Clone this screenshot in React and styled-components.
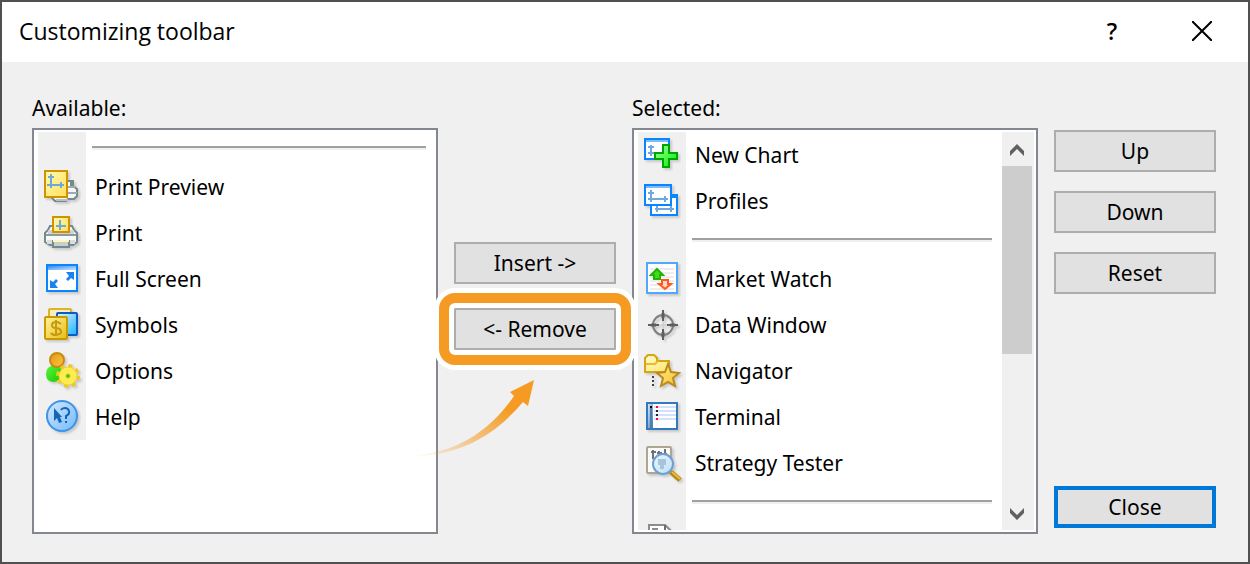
import React from "react";
import styled, { createGlobalStyle } from "styled-components";

const GlobalStyle = createGlobalStyle`
  * {
    box-sizing: border-box;
  }
  body {
    margin: 0;
    color: #000;
    font-family: "Noto Sans", "Open Sans", sans-serif;
    font-size: 21px;
    line-height: 28px;
  }
`;

const Dialog = styled.main`
  display: flex;
  flex-direction: column;
  height: 100vh;
  min-height: 480px;
  border: 2px solid #505050;
  background-color: #f0f0f0;
`;

const TitleBar = styled.header`
  display: flex;
  align-items: center;
  height: 60px;
  padding: 0 31px 3px 17px;
  background-color: white;
`;
const Title = styled.h1`
  flex: 1;
  margin: 0;
  font-family: "Open Sans", "Noto Sans", sans-serif;
  font-size: 23px;
  font-weight: 400;
`;
const TitleButton = styled.button`
  display: flex;
  align-items: center;
  justify-content: center;
  width: 30px;
  height: 30px;
  margin-left: 60px;
  padding: 0;
  border: 0;
  background: none;
  color: #000;
  font-family: "Open Sans", "Noto Sans", sans-serif;
  font-size: 23px;
  font-weight: 600;
`;

const Body = styled.div`
  flex: 1;
  display: flex;
  gap: 16px;
  min-height: 0;
  padding: 32px 32px 28px 30px;
`;

const ListColumn = styled.section`
  flex: 1;
  display: flex;
  flex-direction: column;
  min-width: 0;
`;
const ListLabel = styled.h2`
  margin: 0 0 6px;
  font-size: 21px;
  font-weight: 400;
`;
const ListFrame = styled.div`
  flex: 1;
  display: flex;
  min-height: 0;
  padding: 2px 2px 2px 4px;
  border: 2px solid #828790;
  background-color: white;
`;
const Items = styled.ul`
  flex: 1;
  margin: 0;
  padding: 0;
  overflow: hidden;
  list-style: none;
`;
const Item = styled.li`
  display: flex;
  align-items: center;
  height: 46px;
`;
const Gutter = styled.span`
  display: flex;
  flex: none;
  align-items: center;
  justify-content: center;
  width: 48px;
  height: 100%;
  margin-right: 9px;
  background-color: #f0f0f0;
`;
const Divider = styled.li`
  display: flex;
  height: 32px;
  padding-right: 8px;
`;
const DividerGutter = styled(Gutter)`
  margin-right: 6px;
`;
const DividerLine = styled.span`
  flex: 1;
  height: 4px;
  margin-top: 14px;
  border-top: 2px solid #a0a0a0;
  background-color: #f0f0f0;
`;

const ScrollBar = styled.div`
  display: flex;
  flex-direction: column;
  flex: none;
  width: 32px;
  margin-left: 2px;
  background-color: #f0f0f0;
`;
const ScrollArrow = styled.button`
  display: flex;
  align-items: center;
  justify-content: center;
  width: 30px;
  height: 34px;
  padding: 2px 0 0;
  border: 0;
  background: none;
`;
const Track = styled.div`
  flex: 1;
`;
const Thumb = styled.div`
  width: 30px;
  height: 57%;
  background-color: #cdcdcd;
`;

const ButtonColumn = styled.div`
  display: flex;
  flex-direction: column;
  flex: none;
  width: 162px;
`;
const MoveButtons = styled(ButtonColumn)`
  gap: 24px;
  padding-top: 148px;
`;
const SideButtons = styled(ButtonColumn)`
  gap: 19px;
  padding: 36px 0 6px;
`;
const Button = styled.button`
  width: 100%;
  height: 42px;
  padding: 0;
  border: ${(props) =>
    props.$default ? "4px solid #0078d7" : "2px solid #adadad"};
  background-color: #e1e1e1;
  color: #000;
  font-family: inherit;
  font-size: 21px;
  line-height: 28px;
`;
const CloseButton = styled(Button)`
  margin-top: auto;
`;
const Highlight = styled.div`
  position: relative;
  z-index: 1;
  display: flex;

  &::after {
    content: "";
    position: absolute;
    inset: -15px;
    border: 10px solid #f59b23;
    border-radius: 16px;
    box-shadow: 0 0 0 5px #fff, inset 0 0 0 5px #fff;
    pointer-events: none;
  }
`;
const PointerArrow = styled.svg`
  position: absolute;
  top: 70px;
  left: -44px;
  pointer-events: none;
`;

const IconSvg = styled.svg`
  flex: none;
  overflow: visible;
  filter: drop-shadow(2px 2px 1px rgba(0, 0, 0, 0.16));
`;

const Icon = ({ children }) => (
  <IconSvg width="36" height="36" viewBox="0 0 36 36" fill="none" aria-hidden="true">
    {children}
  </IconSvg>
);

const PrintPreviewIcon = () => (
  <Icon>
    <path d="M22 12h7v5l4 3v7l-3 3h-6l-2 2H11l-3-3z" fill="#f4f6f6" stroke="#75898c" strokeWidth="2" />
    <path d="M24 18h7M24 24h9" stroke="#9babae" strokeWidth="2" />
    <path d="M27 13v4" stroke="#75898c" strokeWidth="2" />
    <path d="M12 31h12" stroke="#b9c2c3" strokeWidth="2" />
    <rect x="1" y="2" width="22" height="26" fill="url(#paper)" stroke="#d29100" strokeWidth="2" />
    <path d="M7 5v14M4 8h6M3 16h17M17 13v6" stroke="#6ea8dc" strokeWidth="2" />
  </Icon>
);

const PrintIcon = () => (
  <Icon>
    <path d="M8 11H6l-2 4-3 3v9l5 3h23l4-3v-9l-3-3-2-4h-2z" fill="#f8f9f9" stroke="#75898c" strokeWidth="2" />
    <path d="M4 17h26" stroke="#d2d2d2" strokeWidth="4" />
    <path d="M2 20h30" stroke="#8b9c9e" strokeWidth="2" />
    <path d="M3 27h28" stroke="#d9dddd" strokeWidth="4" />
    <rect x="9" y="2" width="16" height="15" fill="url(#paper)" stroke="#d29100" strokeWidth="2" />
    <path d="M16 5v10M12 11h10" stroke="#6ea8dc" strokeWidth="2" />
    <rect x="9" y="26" width="16" height="6" fill="#c8cfcf" stroke="#75898c" strokeWidth="2" />
    <path d="M9 26h16" stroke="#fff6bd" strokeWidth="2" />
  </Icon>
);

const FullScreenIcon = () => (
  <Icon>
    <rect x="3" y="4" width="30" height="26" fill="#fff" stroke="#0a84ff" strokeWidth="2" />
    <rect x="4" y="5" width="28" height="4" fill="url(#header)" />
    <path d="M22 11h8v8l-3-2-3 3-2-2 3-3z" fill="#1684f0" />
    <path d="M14 27H6v-8l3 2 3-3 2 2-3 3z" fill="#1684f0" />
  </Icon>
);

const SymbolsIcon = () => (
  <Icon>
    <rect x="5" y="2" width="22" height="20" rx="1" fill="#f8eec0" stroke="#dcb522" strokeWidth="2" />
    <rect x="13" y="6" width="20" height="22" rx="1" fill="url(#blue)" stroke="#0b5cc8" strokeWidth="2" />
    <rect x="1" y="10" width="22" height="22" rx="1" fill="url(#gold)" stroke="#c99a00" strokeWidth="2" />
    <path d="M17 17q-2-2-5-2-4 0-4 3t4 3 5 3-5 4q-4 0-5-2M12 13v16" stroke="#c39a10" strokeWidth="2" />
  </Icon>
);

const OptionsIcon = () => (
  <Icon>
    <path d="M7 13q-5 2-5 8 0 8 8 8 8-1 8-9t-7-7z" fill="url(#green)" />
    <circle cx="13" cy="7" r="7" fill="url(#orange)" stroke="#c98a0e" strokeWidth="2" />
    <circle cx="24" cy="23" r="10" stroke="#ecc92a" strokeWidth="4" strokeDasharray="4 3.85" />
    <circle cx="24" cy="23" r="9" fill="#ffec50" stroke="#f0d030" strokeWidth="1" />
    <circle cx="24" cy="23" r="2" fill="#3fc417" stroke="#b8c810" strokeWidth="1" />
  </Icon>
);

const HelpIcon = () => (
  <Icon>
    <circle cx="18" cy="17" r="15" fill="url(#help)" stroke="#3c94ea" strokeWidth="2" />
    <path d="M10 9v13l3-3 2 5 3-1-2-5h2z" fill="#1465b4" />
    <path d="M17 11q1-2 4-2t4 3-3 5v3M21 23h2" stroke="#1465b4" strokeWidth="2" />
  </Icon>
);

const NewChartIcon = () => (
  <Icon>
    <rect x="1" y="2" width="24" height="20" fill="#fff" stroke="#0a84ff" strokeWidth="2" />
    <path d="M2 4h22" stroke="#7fbcfb" strokeWidth="2" />
    <path d="M7 8v11M4 10h6M4 16h7" stroke="#6ea8dc" strokeWidth="2" />
    <path d="M19 8h6v8h8v6h-8v8h-6v-8h-8v-6h8z" fill="url(#plus)" stroke="#00a600" strokeWidth="2" />
  </Icon>
);

const ProfilesIcon = () => (
  <Icon>
    <rect x="7" y="12" width="26" height="20" fill="#fff" stroke="#0a84ff" strokeWidth="2" />
    <path d="M28 13h5" stroke="#0a84ff" strokeWidth="4" />
    <path d="M11 26h19M13 23v6M27 23v6" stroke="#6ea8dc" strokeWidth="2" />
    <rect x="1" y="2" width="26" height="20" fill="#fff" stroke="#0a84ff" strokeWidth="2" />
    <path d="M2 4h24" stroke="#7fbcfb" strokeWidth="2" />
    <path d="M7 7v12M4 10h6M4 16h20M21 13v6" stroke="#6ea8dc" strokeWidth="2" />
  </Icon>
);

const MarketWatchIcon = () => (
  <Icon>
    <rect x="3" y="2" width="30" height="30" fill="#fff" stroke="#4fa8fd" strokeWidth="2" />
    <path d="M6 8h24M6 12h24M6 16h24M6 20h24M6 24h24M6 28h24" stroke="#ededed" strokeWidth="2" />
    <path d="M13 8l6 6h-3v4h-6v-4H7z" fill="#3fdc1c" stroke="#22b408" strokeWidth="2" />
    <path d="M21 28l-6-5h3v-4h6v4h3z" fill="#ffd6c8" stroke="#ff5a1c" strokeWidth="2" />
  </Icon>
);

const DataWindowIcon = () => (
  <Icon>
    <circle cx="19" cy="18" r="10" stroke="#808080" strokeWidth="2" />
    <path d="M19 3v11M19 22v11M4 18h11M23 18h11" stroke="#5e5e5e" strokeWidth="2" />
    <path d="M19 6v5M19 25v5M7 18h5M26 18h5" stroke="#5e5e5e" strokeWidth="3" />
    <path d="M19 14v8M15 18h8" stroke="#c5c5c5" strokeWidth="1" />
  </Icon>
);

const NavigatorIcon = () => (
  <Icon>
    <path d="M1 19V5l3-3h6l3 3v3h12v11z" fill="url(#folder)" stroke="#d5a514" strokeWidth="2" />
    <path d="M2 11h9l3-3" stroke="#e3bd3a" strokeWidth="2" />
    <path d="M9 23v12" stroke="#404040" strokeWidth="2" strokeDasharray="2 2" />
    <path d="M24 11l3 8 8 1-6 5 2 8-7-4-7 4 2-8-6-5 8-1z" fill="url(#star)" stroke="#b98b1d" strokeWidth="2" />
  </Icon>
);

const TerminalIcon = () => (
  <Icon>
    <rect x="3" y="4" width="30" height="26" fill="#fff" stroke="#3279bd" strokeWidth="2" />
    <rect x="4" y="5" width="5" height="24" fill="url(#strip)" />
    <path d="M7 9v20" stroke="#4a7fb0" strokeWidth="2" />
    <path d="M6 8h2" stroke="#000" strokeWidth="2" />
    <path d="M10 8h22M10 12h22M10 16h22M10 20h22" stroke="#d3e1ff" strokeWidth="2" />
    <path d="M12 8h2M12 20h2" stroke="#ff1010" strokeWidth="2" />
    <path d="M12 12h2M12 16h2" stroke="#202020" strokeWidth="2" />
  </Icon>
);

const StrategyTesterIcon = () => (
  <Icon>
    <rect x="3" y="2" width="24" height="26" rx="1" fill="#fafafa" stroke="#aaa692" strokeWidth="2" />
    <path d="M9 5v9M7 7h5M15 6v7M13 8h5M21 4v8M19 9h4" stroke="#6f7275" strokeWidth="2" />
    <path d="M27 27l9 8" stroke="#b8860b" strokeWidth="5" />
    <path d="M28 27l8 7" stroke="#e9bd3c" strokeWidth="2" />
    <circle cx="19" cy="19" r="10" fill="url(#lens)" stroke="#6d9fd2" strokeWidth="2" />
    <path d="M14 14h8v6h-2v4h-4v-4h-2z" fill="#93b3cd" opacity="0.7" />
  </Icon>
);

const DocumentIcon = () => (
  <Icon>
    <path d="M5 36V2h16l6 6v28z" fill="#fff" stroke="#8c8c8c" strokeWidth="2" />
    <path d="M21 2v6h6" stroke="#6e6e6e" strokeWidth="2" />
    <path d="M8 6h6" stroke="#8c8c8c" strokeWidth="2" />
  </Icon>
);

const Gradient = ({ id, from, to }) => (
  <linearGradient id={id} x1="0" y1="0" x2="1" y2="1">
    <stop offset="0" stopColor={from} />
    <stop offset="1" stopColor={to} />
  </linearGradient>
);

const Gradients = () => (
  <defs>
    <Gradient id="paper" from="#fffbb0" to="#ffe05a" />
    <Gradient id="header" from="#2f8cf4" to="#c9e4ff" />
    <Gradient id="blue" from="#e8f4ff" to="#19b4f8" />
    <Gradient id="gold" from="#fff3a0" to="#e8bd10" />
    <Gradient id="green" from="#5cf53c" to="#14c800" />
    <Gradient id="orange" from="#dd9a10" to="#ffc64a" />
    <Gradient id="help" from="#d2e9ff" to="#74b9fb" />
    <Gradient id="plus" from="#a4ffa4" to="#00f000" />
    <Gradient id="folder" from="#fffbd0" to="#ffe46a" />
    <Gradient id="star" from="#ffe98c" to="#f5c32c" />
    <Gradient id="strip" from="#d8e9f8" to="#3e7ab5" />
    <Gradient id="lens" from="#e9f5ff" to="#c0dff6" />
  </defs>
);

const available = [
  { divider: true },
  { name: "Print Preview", icon: PrintPreviewIcon },
  { name: "Print", icon: PrintIcon },
  { name: "Full Screen", icon: FullScreenIcon },
  { name: "Symbols", icon: SymbolsIcon },
  { name: "Options", icon: OptionsIcon },
  { name: "Help", icon: HelpIcon },
];

const selected = [
  { name: "New Chart", icon: NewChartIcon },
  { name: "Profiles", icon: ProfilesIcon },
  { divider: true },
  { name: "Market Watch", icon: MarketWatchIcon },
  { name: "Data Window", icon: DataWindowIcon },
  { name: "Navigator", icon: NavigatorIcon },
  { name: "Terminal", icon: TerminalIcon },
  { name: "Strategy Tester", icon: StrategyTesterIcon },
  { divider: true },
  { icon: DocumentIcon },
];

const ToolList = ({ id, label, items, children }) => (
  <ListColumn>
    <ListLabel id={id}>{label}</ListLabel>
    <ListFrame>
      <Items aria-labelledby={id}>
        {items.map((item, index) =>
          item.divider ? (
            <Divider key={index}>
              <DividerGutter />
              <DividerLine />
            </Divider>
          ) : (
            <Item key={index}>
              <Gutter>
                <item.icon />
              </Gutter>
              {item.name}
            </Item>
          )
        )}
      </Items>
      {children}
    </ListFrame>
  </ListColumn>
);

const App = () => {
  return (
    <Dialog>
      <GlobalStyle />
      <TitleBar>
        <Title>Customizing toolbar</Title>
        <TitleButton aria-label="Help">?</TitleButton>
        <TitleButton aria-label="Close window">
          <svg width="20" height="20" viewBox="0 0 20 20">
            <path d="M0 0l20 20M20 0L0 20" stroke="#000" strokeWidth="2" />
          </svg>
        </TitleButton>
      </TitleBar>
      <Body>
        <ToolList id="available" label="Available:" items={available} />
        <MoveButtons>
          <Button>Insert -&gt;</Button>
          <Highlight>
            <Button>&lt;- Remove</Button>
            <PointerArrow width="126" height="80" viewBox="0 0 126 80" aria-hidden="true">
              <defs>
                <linearGradient id="pointer" x1="0" y1="1" x2="1" y2="0">
                  <stop offset="0" stopColor="#f59b23" stopOpacity="0" />
                  <stop offset="0.7" stopColor="#f59b23" />
                </linearGradient>
              </defs>
              <path
                d="M0 78C50 78 84 58 113 24l5 4 6-26-24 12 4 4C82 50 50 75 0 78z"
                fill="url(#pointer)"
              />
            </PointerArrow>
          </Highlight>
        </MoveButtons>
        <ToolList id="selected" label="Selected:" items={selected}>
          <ScrollBar>
            <ScrollArrow aria-label="Scroll up">
              <svg width="14" height="12" viewBox="0 0 14 12">
                <path d="M7 0l7 7v5L7 5l-7 7V7z" fill="#606060" />
              </svg>
            </ScrollArrow>
            <Track>
              <Thumb />
            </Track>
            <ScrollArrow aria-label="Scroll down">
              <svg width="14" height="12" viewBox="0 0 14 12">
                <path d="M7 12L0 5V0l7 7 7-7v5z" fill="#606060" />
              </svg>
            </ScrollArrow>
          </ScrollBar>
        </ToolList>
        <SideButtons>
          <Button>Up</Button>
          <Button>Down</Button>
          <Button>Reset</Button>
          <CloseButton $default>Close</CloseButton>
        </SideButtons>
      </Body>
      <svg width="0" height="0" aria-hidden="true">
        <Gradients />
      </svg>
    </Dialog>
  );
};

export default App;
